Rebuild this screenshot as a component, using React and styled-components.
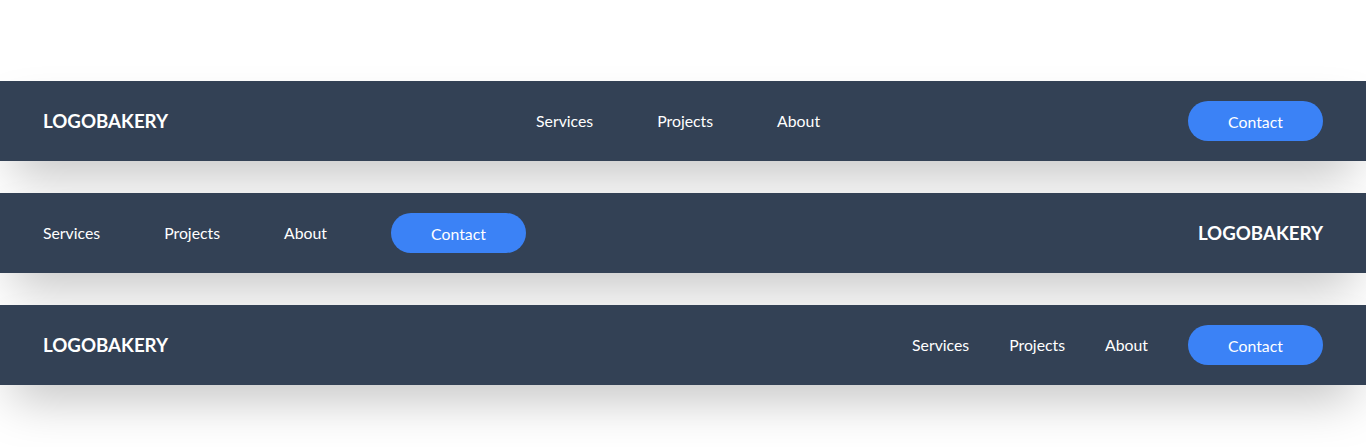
import styled, { createGlobalStyle } from 'styled-components';

const GlobalStyle = createGlobalStyle`
    html, body {
        margin: 0;
        padding: 0;
        background: #ffffff;
        font-family: "Lato", "Open Sans", sans-serif;
    }
`;

const Page = styled.div`
    display: flex;
    flex-direction: column;
    gap: 32px;
    padding-top: 81px;
    min-height: 447px;
    box-sizing: border-box;
`;

const Bar = styled.nav`
    height: 80px;
    padding: 0 43px;
    display: flex;
    align-items: center;
    justify-content: ${props => props.$justify || 'space-between'};
    background: #334155;
    box-shadow: 0 25px 50px -12px rgba(0, 0, 0, 0.25);
    color: #ffffff;
`;

const Logo = styled.a`
    font-size: 18.7px;
    font-weight: 700;
    color: #ffffff;
    text-decoration: none;
`;

const Links = styled.ul`
    display: flex;
    align-items: center;
    gap: ${props => props.$gap || '64px'};
    margin: 0;
    padding: 0;
    list-style: none;
`;

const LinkItem = styled.li`
    font-size: 15.8px;
    line-height: 24px;
`;

const NavLink = styled.a`
    color: #ffffff;
    text-decoration: none;
`;

const ContactButton = styled.button`
    height: 40px;
    width: 135px;
    padding: 0;
    border: 0;
    border-radius: 9999px;
    background: #3b82f6;
    color: #ffffff;
    font-family: inherit;
    font-size: 15.8px;
    cursor: pointer;
`;

const items = ['Services', 'Projects', 'About'];

const NavItems = () => items.map(label => (
    <LinkItem key={label}>
        <NavLink href="#">{label}</NavLink>
    </LinkItem>
));

const App = () => {
    return (
        <>
            <GlobalStyle />
            <Page>
                <Bar>
                    <Logo href="#">LOGOBAKERY</Logo>
                    <Links>
                        <NavItems />
                    </Links>
                    <ContactButton>Contact</ContactButton>
                </Bar>
                <Bar>
                    <Links>
                        <NavItems />
                        <li><ContactButton>Contact</ContactButton></li>
                    </Links>
                    <Logo href="#">LOGOBAKERY</Logo>
                </Bar>
                <Bar>
                    <Logo href="#">LOGOBAKERY</Logo>
                    <Links $gap="40px">
                        <NavItems />
                        <li><ContactButton>Contact</ContactButton></li>
                    </Links>
                </Bar>
            </Page>
        </>
    );
};

export default App;
